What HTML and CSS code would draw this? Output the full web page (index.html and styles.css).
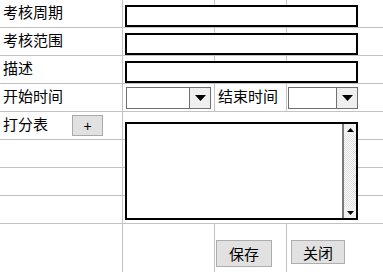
FILE: index.html
```html
<!DOCTYPE html>
<html lang="zh-CN">
<head>
<meta charset="utf-8">
<title>考核</title>
<link rel="stylesheet" href="styles.css">
</head>
<body>
<div class="form-grid">
  <div class="cell label">考核周期</div>
  <div class="cell field over"><input class="text-input" type="text"></div>
  <div class="cell"></div>
  <div class="cell"></div>

  <div class="cell label">考核范围</div>
  <div class="cell field over"><input class="text-input" type="text"></div>
  <div class="cell"></div>
  <div class="cell"></div>

  <div class="cell label">描述</div>
  <div class="cell field over"><input class="text-input" type="text"></div>
  <div class="cell"></div>
  <div class="cell"></div>

  <div class="cell label">开始时间</div>
  <div class="cell combo-cell first">
    <div class="combo combo-start">
      <span class="combo-value"></span>
      <span class="combo-arrow"><svg width="11" height="6" viewBox="0 0 11 6"><polygon points="0,0 11,0 5.5,6" fill="#000"/></svg></span>
    </div>
  </div>
  <div class="cell label">结束时间</div>
  <div class="cell combo-cell second">
    <div class="combo combo-end">
      <span class="combo-value"></span>
      <span class="combo-arrow"><svg width="11" height="6" viewBox="0 0 11 6"><polygon points="0,0 11,0 5.5,6" fill="#000"/></svg></span>
    </div>
  </div>

  <div class="cell label score">
    <span>打分表</span>
    <button class="add-btn" type="button">+</button>
  </div>
  <div class="cell wide over">
    <div class="textbox">
      <textarea class="textbox-input"></textarea>
      <div class="scrollbar">
        <span class="scroll-btn"><svg width="7" height="4" viewBox="0 0 7 4"><polygon points="3.5,0 7,4 0,4" fill="#000"/></svg></span>
        <span class="scroll-track"></span>
        <span class="scroll-btn"><svg width="7" height="4" viewBox="0 0 7 4"><polygon points="0,0 7,0 3.5,4" fill="#000"/></svg></span>
      </div>
    </div>
  </div>

  <div class="cell"></div>
  <div class="cell wide"></div>

  <div class="cell"></div>
  <div class="cell wide"></div>

  <div class="cell"></div>
  <div class="cell wide"></div>

  <div class="cell"></div>
  <div class="cell"></div>
  <div class="cell actions"><button class="btn btn-save" type="button">保存</button></div>
  <div class="cell actions"><button class="btn btn-close" type="button">关闭</button></div>
</div>
</body>
</html>
```

FILE: styles.css
```css
html, body {
  margin: 0;
  padding: 0;
  background: #fff;
}

body {
  font-family: "Noto Sans CJK SC", "Noto Sans", sans-serif;
  font-size: 15px;
  color: #000;
}

.form-grid {
  display: grid;
  grid-template-columns: 122px 91px 71px 96px;
  grid-template-rows: repeat(8, 27px) 48px;
  gap: 1px;
  width: 383px;
  background: #c3c3c3;
}

.cell {
  background: #fff;
  min-width: 0;
}

.over {
  z-index: 1;
}

.label {
  padding-left: 3px;
  line-height: 23px;
  white-space: nowrap;
}

.field {
  padding: 5px 0 0 2px;
}

.text-input {
  display: block;
  box-sizing: border-box;
  width: 233px;
  height: 22px;
  margin: 0;
  border: 2px solid #000;
  padding: 0 2px;
  background: #fff;
  font: inherit;
  outline: none;
}

.combo-cell {
  padding-top: 3px;
}

.combo-cell.first {
  padding-left: 3px;
}

.combo-cell.second {
  padding-left: 1px;
}

.combo {
  display: flex;
  box-sizing: border-box;
  height: 22px;
  border: 1px solid #707070;
  background: #fff;
}

.combo-start {
  width: 85px;
}

.combo-end {
  width: 70px;
}

.combo-value {
  flex: 1;
}

.combo-arrow {
  display: flex;
  align-items: center;
  justify-content: center;
  width: 20px;
  border-left: 1px solid #707070;
  background: #efefef;
}

.score {
  display: flex;
  align-items: flex-start;
  gap: 24px;
}

.add-btn {
  box-sizing: border-box;
  width: 31px;
  height: 21px;
  margin: 3px 0 0;
  padding: 0;
  border: 1px solid #a9a9a9;
  background: #e1e1e1;
  font: 14px "Liberation Sans", sans-serif;
  line-height: 18px;
  color: #000;
}

.wide {
  grid-column: span 3;
}

.textbox {
  display: flex;
  box-sizing: border-box;
  width: 233px;
  height: 98px;
  margin: 10px 0 0 2px;
  border: 2px solid #000;
  background: #fff;
}

.textbox-input {
  flex: 1;
  margin: 0;
  border: 0;
  padding: 0;
  resize: none;
  outline: none;
  background: #fff;
  font: inherit;
}

.scrollbar {
  display: flex;
  flex-direction: column;
  width: 12px;
  border-left: 2px solid #7a7a7a;
}

.scroll-btn {
  display: flex;
  align-items: center;
  justify-content: center;
  height: 11px;
  background: #f0f0f0;
}

.scroll-track {
  flex: 1;
  background: repeating-conic-gradient(#dcdcdc 0 25%, #fff 0 50%) 0 0 / 2px 2px;
}

.actions {
  padding-top: 16px;
}

.btn {
  box-sizing: border-box;
  margin: 0;
  padding: 0;
  border: 1px solid #adadad;
  background: #e1e1e1;
  font: inherit;
  line-height: 1;
  color: #000;
}

.btn-save {
  width: 56px;
  height: 27px;
  margin-left: 1px;
}

.btn-close {
  width: 54px;
  height: 24px;
  margin-left: 4px;
}
```
